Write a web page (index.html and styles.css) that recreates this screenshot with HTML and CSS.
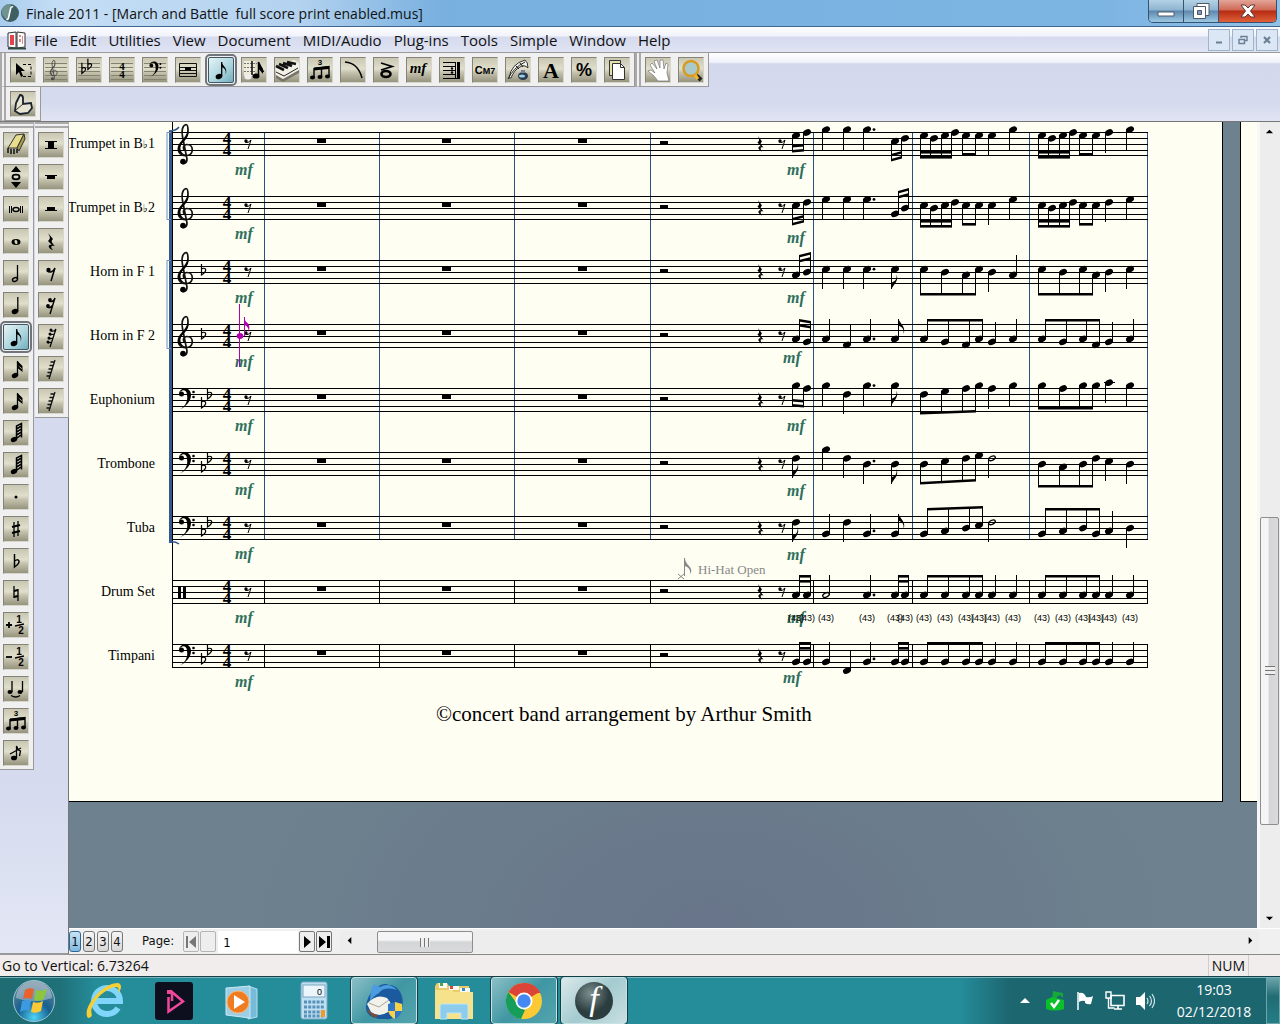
FILE: index.html
```html
<!DOCTYPE html>
<html lang="en">
<head>
	<meta charset="utf-8">
	<meta name="viewport" content="width=device-width, initial-scale=1">
	<title>Finale 2011 - [March and Battle  full score print enabled.mus]</title>
	<link rel="stylesheet" href="styles.css">
</head>
<body>

<!-- Shared icon shapes -->
<svg class="defs" aria-hidden="true">
	<symbol id="lines" viewBox="0 0 24 24"><path d="M1 5.500h22M1 9.500h22M1 13.500h22M1 17.500h22M1 21.500h22" stroke="#85836f" fill="none"/></symbol>
	<symbol id="treble" viewBox="-10 -10 20 44"><path d="M0 18.500c-4-1-3-6 1-6c7 0 7 10 0 11c-6 1-9.500-3-8.500-8c1-6 9.500-9 9.500-17c0-4-1-6-2-6c-4 1-4.500 7-3.500 12l4.500 22.500c0 5-5 6-6 3" fill="none" stroke="currentColor" stroke-width="1.700"/><path d="M-7.500 15c1-6 9.500-9 9.500-17l.5 3c0 6-7 9-8 14-.5 4 2 8 7 8-6 1-10-3-9-8z"/><circle cx="-3" cy="29.500" r="2.800"/></symbol>
	<symbol id="bass" viewBox="0 0 18 24"><circle cx="3.500" cy="6" r="2.500"/><path d="M1 6c0-7 12-8 12 1c0 7-6 12-12 15c7-4 9-9 8-15c0-6-6-6-8-1z"/><circle cx="15.500" cy="4" r="1.300"/><circle cx="15.500" cy="9" r="1.300"/></symbol>
	<symbol id="whole" viewBox="0 0 24 24"><ellipse cx="12" cy="13" rx="4.500" ry="3"/><ellipse cx="12" cy="13" rx="1.400" ry="2.200" fill="#d4d2ba" transform="rotate(-20 12 13)"/></symbol>
	<symbol id="n2" viewBox="0 0 24 24"><ellipse cx="11" cy="18.500" rx="2.600" ry="1.800" transform="rotate(-25 11 18.500)" fill="none" stroke="#000" stroke-width="1.400"/><path d="M13.500 18V4" stroke="#000" stroke-width="1.300"/></symbol>
	<symbol id="n4" viewBox="0 0 24 24"><ellipse cx="11" cy="18.500" rx="3.400" ry="2.600" transform="rotate(-20 11 18.500)"/><path d="M13.800 18V4" stroke="#000" stroke-width="1.300"/></symbol>
	<symbol id="n8" viewBox="0 0 24 24"><ellipse cx="10" cy="18.500" rx="3.400" ry="2.600" transform="rotate(-20 10 18.500)"/><path d="M12.700 18V4" stroke="#000" stroke-width="1.300"/><path d="M12.500 4c1 4 7 6 4 13c1-5-1-7-4-8z"/></symbol>
	<symbol id="n16" viewBox="0 0 24 24"><ellipse cx="11" cy="18.500" rx="3.300" ry="2.500" transform="rotate(-20 11 18.500)"/><path d="M13.500 18V4" stroke="#000" stroke-width="1.300"/><path d="M13.500 4l5 5v5l-1-3l-4-3zM13.500 8l5 5v2l-5-4z"/></symbol>
	<symbol id="n32" viewBox="0 0 24 24"><ellipse cx="10" cy="18.500" rx="3.300" ry="2.500" transform="rotate(-20 10 18.500)"/><path d="M12.500 18V5l5-2.500v14M12.500 8l5-3M12.500 11l5-3M12.500 14l5-3M13 17l4-3" stroke="#000" stroke-width="1.500" fill="none"/></symbol>
	<symbol id="r4" viewBox="0 0 24 24"><path d="M9 4l5 6c-2 2-2 3 2 7c-4-1-5 1-2 4c-5-1-6-6-1-5l-4-4c3-3 2-4 0-8z"/></symbol>
	<symbol id="r8" viewBox="0 0 24 24"><circle cx="9.500" cy="9" r="2.200"/><path d="M8 10q5 3 8-3l-4 13" fill="none" stroke="#000" stroke-width="1.500"/></symbol>
	<symbol id="r16" viewBox="0 0 24 24"><circle cx="11" cy="7" r="1.900"/><circle cx="9" cy="13" r="1.900"/><path d="M10 8q4 2 6-3l-5 16M8 14q3 2 6-2" fill="none" stroke="#000" stroke-width="1.400"/></symbol>
	<symbol id="r32" viewBox="0 0 24 24"><circle cx="12" cy="5" r="1.500"/><circle cx="11" cy="9" r="1.500"/><circle cx="10" cy="13" r="1.500"/><circle cx="9" cy="17" r="1.500"/><path d="M12 6q3 1 5-2l-6 18M11 10l4-1M10 14l4-1M9 18l4-1" fill="none" stroke="#000" stroke-width="1.200"/></symbol>
	<symbol id="r64" viewBox="0 0 24 24"><path d="M16 3l-6 19M15.500 5h-4M14.500 8.500h-4M13.500 12h-4M12.500 15.500h-4M11.500 19h-4" fill="none" stroke="#111" stroke-width="1.300"/></symbol>
	<symbol id="tuplet" viewBox="0 0 24 24"><text x="12" y="7" class="t-sans" font-size="8" text-anchor="middle">3</text><path d="M6 19V10.500L21 8.500v10M13.500 19V9.500" fill="none" stroke="#000" stroke-width="1.400"/><path d="M6 9.500l15-1.500v3l-15 1.500z"/><ellipse cx="4.500" cy="19.500" rx="2.500" ry="2"/><ellipse cx="12" cy="19" rx="2.500" ry="2"/><ellipse cx="19.500" cy="18.500" rx="2.500" ry="2"/></symbol>
	<symbol id="flatsign" viewBox="0 0 10 16"><path d="M3 1v13c3-2 5-4 4.500-6c-1-2-3-1-4.500 0" fill="none" stroke="#000" stroke-width="1.500"/></symbol>
</svg>

<header class="titlebar">
	<svg class="app-icon" viewBox="0 0 20 20"><circle cx="10" cy="10" r="9" fill="#3e5f62"/><path d="M2 6a9 9 0 0 1 9-5L8 17a9 9 0 0 1-6-11z" fill="#6f9391"/><path d="M13 4q-2-1-2.500 2l-2 9q-.500 2-2 1" stroke="#fff" stroke-width="1.600" fill="none"/></svg>
	<h1>Finale 2011 - [March and Battle&nbsp; full score print enabled.mus]</h1>
	<div class="window-buttons">
		<button aria-label="Minimize"><svg viewBox="0 0 20 18"><path d="M2 10h16v4H2z" fill="#fff" stroke="#4c5a68"/></svg></button>
		<button aria-label="Restore"><svg viewBox="0 0 20 18"><path d="M6 1.500h12v12H6z" fill="#fff" stroke="#4c5a68"/><path d="M2.500 4.500h12v12h-12z" fill="#fff" stroke="#4c5a68"/><path d="M6.500 8.500h4v4h-4z" fill="#7d9cbb" stroke="#4c5a68"/></svg></button>
		<button class="close" aria-label="Close"><svg viewBox="0 0 20 18"><path d="M3 3h4l3 3 3-3h4l-4.500 6 4.500 6h-4l-3-3-3 3H3l4.500-6z" fill="#fff" stroke="#5d3a3a"/></svg></button>
	</div>
</header>

<nav class="menubar">
	<svg class="doc-icon" viewBox="0 0 20 20"><path d="M1 3l8-1v16l-8-1zM10 2l8 1v14l-8 1z" fill="#fff" stroke="#333"/><path d="M3 5h4v10H3z" fill="#e2434e"/><path d="M12 5h2v2h-2zM12 9h2v3h-2zM15 6h1v8h-1z" fill="#da8a8a"/><path d="M1 18.500h18" stroke="#2c4a40" stroke-width="2"/></svg>
	<button>File</button>
	<button>Edit</button>
	<button>Utilities</button>
	<button>View</button>
	<button>Document</button>
	<button>MIDI/Audio</button>
	<button>Plug-ins</button>
	<button>Tools</button>
	<button>Simple</button>
	<button>Window</button>
	<button>Help</button>
	<div class="mdi-buttons">
		<button aria-label="Minimize document"><svg viewBox="0 0 10 10"><path d="M2 7.500h6" stroke="#6d7f93" stroke-width="2"/></svg></button>
		<button aria-label="Restore document"><svg viewBox="0 0 10 10"><path d="M3 3V1.500h6v4H7M1 4.500h5.500v4H1z" stroke="#6d7f93" stroke-width="1.400" fill="none"/></svg></button>
		<button aria-label="Close document"><svg viewBox="0 0 10 10"><path d="M2 2l6 6M8 2l-6 6" stroke="#6d7f93" stroke-width="2.200"/></svg></button>
	</div>
</nav>

<div class="toolbars">
	<div class="toolbar">
		<div class="tools">
			<button class="tool" aria-label="Selection"><svg viewBox="0 0 24 24"><path d="M5 5v12l3-3 2 5 2-1-2-5h4z"/><path d="M12 6.500h8v12h-8" fill="none" stroke="#000" stroke-dasharray="3 2"/></svg></button>
			<button class="tool" aria-label="Staff"><svg viewBox="0 0 24 24"><use href="#lines"/><use href="#treble" x="4" y="1" width="12" height="22" fill="#444" color="#444"/></svg></button>
			<button class="tool" aria-label="Key signature"><svg viewBox="0 0 24 24"><use href="#lines"/><use href="#flatsign" x="2" y="4" width="9" height="13"/><use href="#flatsign" x="8" y="0" width="9" height="13"/></svg></button>
			<button class="tool" aria-label="Time signature"><svg viewBox="0 0 24 24"><use href="#lines"/><text x="12" y="12" class="t-serif" font-size="11" text-anchor="middle">4</text><text x="12" y="20" class="t-serif" font-size="11" text-anchor="middle">4</text></svg></button>
			<button class="tool" aria-label="Clef"><svg viewBox="0 0 24 24"><use href="#lines"/><use href="#bass" x="4" y="3" width="17" height="18"/></svg></button>
			<button class="tool" aria-label="Measure"><svg viewBox="0 0 24 24"><path d="M3.500 5.500h17v13h-17zM3.500 9.500h17M3.500 12.500h17M3.500 15.500h17" fill="none" stroke="#111"/><path d="M9 9h6v3H9z"/></svg></button>
			<button class="tool selected" aria-label="Simple entry"><svg viewBox="0 0 24 24"><use href="#n8"/></svg></button>
			<button class="tool" aria-label="Speedy entry"><svg viewBox="0 0 24 24"><path d="M2 3h11v15H2z" fill="#eeeddc"/><path d="M2 5.500h13M2 9.500h12M2 13.500h12" stroke="#777" stroke-dasharray="2 1"/><ellipse cx="6" cy="19" rx="3.500" ry="2.500" fill="#eee"/><ellipse cx="14" cy="18" rx="3.500" ry="2.600"/><path d="M10 17V3M16.500 17V4l5 10" stroke="#000" stroke-width="1.500" fill="none"/><path d="M16 4l5 7v5l-5-6z"/></svg></button>
			<button class="tool" aria-label="HyperScribe"><svg viewBox="0 0 24 24"><path d="M1 9L19 2l5 3v9L8 23l-7-4z" fill="#f1f1e8"/><path d="M1 17l7 4 16-9v3L8 24l-7-4z" fill="#77756a"/><path d="M1 8l8 4M4 6l9 4M8 5l9 3M12 4l9 2" stroke="#111" stroke-width="2.600"/><path d="M1 14l8 4 14-8" stroke="#222" fill="none"/></svg></button>
			<button class="tool" aria-label="Tuplet"><svg viewBox="0 0 24 24"><use href="#tuplet"/></svg></button>
			<button class="tool" aria-label="Smart shape"><svg viewBox="0 0 24 24"><path d="M4 4q13 1 17 16" fill="none" stroke="#000" stroke-width="1.500"/></svg></button>
			<button class="tool" aria-label="Articulation"><svg viewBox="0 0 24 24"><path d="M7 5l11 3.500L7 12" fill="none" stroke="#000" stroke-width="1.800"/><ellipse cx="12" cy="16" rx="4.500" ry="3" fill="none" stroke="#000" stroke-width="2.600"/></svg></button>
			<button class="tool" aria-label="Expression"><svg viewBox="0 0 24 24"><text x="11" y="15" class="t-dyn" font-size="15" text-anchor="middle">mf</text></svg></button>
			<button class="tool" aria-label="Repeat"><svg viewBox="0 0 24 24"><path d="M3 4.500h12M3 8.500h12M3 12.500h12M3 16.500h12M3 20.500h16M15.500 4v16" stroke="#000" fill="none"/><path d="M17 4h3v17h-3z"/><circle cx="12" cy="10.500" r="1.200"/><circle cx="12" cy="14.500" r="1.200"/></svg></button>
			<button class="tool" aria-label="Chord"><svg viewBox="0 0 24 24"><text x="12" y="16" class="t-sans" font-size="11" text-anchor="middle">C<tspan font-size="9">M7</tspan></text></svg></button>
			<button class="tool" aria-label="Lyrics"><svg viewBox="0 0 24 24"><path d="M3 20Q5 6 19 2q3 2 3 8-4-4-8-1-6 3-9 11z" fill="#f4f4ee" stroke="#333"/><path d="M2 21Q7 10 19 4M10 8l3 3M14 5l3 4" stroke="#222" fill="none"/><ellipse cx="17" cy="18" rx="5" ry="4" fill="#27384f"/><ellipse cx="16" cy="18" rx="3" ry="1.500" fill="#9ccbe3"/><path d="M15 12h4v3h-4z" fill="#72839a"/></svg></button>
			<button class="tool" aria-label="Text"><svg viewBox="0 0 24 24"><text x="12" y="20" class="t-serif" font-size="22" text-anchor="middle">A</text></svg></button>
			<button class="tool" aria-label="Resize"><svg viewBox="0 0 24 24"><text x="12" y="18" class="t-sans" font-size="18" text-anchor="middle">%</text></svg></button>
			<button class="tool" aria-label="Page layout"><svg viewBox="0 0 24 24"><path d="M4.500 2.500h11v15h-11z" fill="#e5e0ac" stroke="#333"/><path d="M7.500 5.500h8l4 4v12h-12z" fill="#fff" stroke="#333"/><path d="M15.500 5.500v4h4" fill="none" stroke="#333"/></svg></button>
		</div>
		<div class="tools">
			<button class="tool" aria-label="Hand grabber"><svg viewBox="0 0 24 24"><path d="M2 13l3-1 4 3-5-8 2-2 5 6-3-8 3-1 3 8 0-8h3l1 9 2-6 2 1-1 9 2 8H12l-4-5z" fill="#fff" stroke="#777" stroke-width=".700"/></svg></button>
			<button class="tool" aria-label="Zoom"><svg viewBox="0 0 24 24"><path d="M17 17l5 5" stroke="#222" stroke-width="4"/><circle cx="12" cy="10.500" r="7.500" fill="#a9c9ca" stroke="#d99a20" stroke-width="2.500"/><path d="M16 17l3 4" stroke="#f5b728" stroke-width="3"/></svg></button>
		</div>
	</div>
	<div class="toolbar">
		<div class="tools">
			<button class="tool" aria-label="Open book"><svg viewBox="0 0 24 24"><path d="M5 11l4-8q3 0 3 3v6l8-1 1 5-4 5-8 1-5-3z" fill="#e8e6d2" stroke="#1b2230" stroke-width="1.800"/><path d="M5 18l7-6" stroke="#333"/></svg></button>
		</div>
	</div>
</div>

<main class="workspace">
	<aside class="palettes">
		<div class="palette">
			<button class="tool" aria-label="Eraser"><svg viewBox="0 0 24 24"><path d="M4 15L12 2l8-1-7 14z" fill="#e6de8d" stroke="#333"/><path d="M13 15l7-14 1 5-6 12z" fill="#a89d4b" stroke="#333"/><path d="M4 15v5M7 16v5M10 16v5M13 16v4" stroke="#111" stroke-width="1.500"/></svg></button>
			<button class="tool" aria-label="Repitch"><svg viewBox="0 0 24 24"><path d="M12 1l5 6H7zM12 23l5-6H7z"/><ellipse cx="12" cy="12" rx="3.500" ry="2.300" fill="none" stroke="#000" stroke-width="1.800"/></svg></button>
			<button class="tool" aria-label="Double whole note"><svg viewBox="0 0 24 24"><path d="M5.500 9v7M7.500 9v7M16.500 9v7M18.500 9v7" stroke="#000"/><ellipse cx="12" cy="12.500" rx="3" ry="2" fill="none" stroke="#000" stroke-width="1.500"/></svg></button>
			<button class="tool" aria-label="Whole note"><svg><use href="#whole"/></svg></button>
			<button class="tool" aria-label="Half note"><svg><use href="#n2"/></svg></button>
			<button class="tool" aria-label="Quarter note"><svg><use href="#n4"/></svg></button>
			<button class="tool selected" aria-label="Eighth note"><svg><use href="#n8"/></svg></button>
			<button class="tool" aria-label="16th note"><svg><use href="#n16"/></svg></button>
			<button class="tool" aria-label="32nd note"><svg><use href="#n16"/></svg></button>
			<button class="tool" aria-label="64th note"><svg><use href="#n32"/></svg></button>
			<button class="tool" aria-label="128th note"><svg><use href="#n32"/></svg></button>
			<button class="tool" aria-label="Dot"><svg viewBox="0 0 24 24"><circle cx="12" cy="12" r="1.500"/></svg></button>
			<button class="tool" aria-label="Sharp"><svg viewBox="0 0 24 24"><path d="M10 5v15M14 4v15" stroke="#000" stroke-width="1.300"/><path d="M8 10l8-2M8 16l8-2" stroke="#000" stroke-width="2.200"/></svg></button>
			<button class="tool" aria-label="Flat"><svg viewBox="0 0 24 24"><use href="#flatsign" x="6" y="4" width="13" height="16"/></svg></button>
			<button class="tool" aria-label="Natural"><svg viewBox="0 0 24 24"><path d="M10 5v12M14 8v12" stroke="#000" stroke-width="1.300"/><path d="M10 10l4-1M10 16l4-1" stroke="#000" stroke-width="2.200"/></svg></button>
			<button class="tool" aria-label="Half step up"><svg viewBox="0 0 24 24"><path d="M2 12h6M5 9v6" stroke="#000" stroke-width="1.800"/><text x="15" y="10" class="t-sans" font-size="10" text-anchor="middle">1</text><path d="M11 13l9-2" stroke="#000" stroke-width="1.300"/><text x="17" y="21" class="t-sans" font-size="10" text-anchor="middle">2</text></svg></button>
			<button class="tool" aria-label="Half step down"><svg viewBox="0 0 24 24"><path d="M2 12h6" stroke="#000" stroke-width="1.800"/><text x="15" y="10" class="t-sans" font-size="10" text-anchor="middle">1</text><path d="M11 13l9-2" stroke="#000" stroke-width="1.300"/><text x="17" y="21" class="t-sans" font-size="10" text-anchor="middle">2</text></svg></button>
			<button class="tool" aria-label="Tie"><svg viewBox="0 0 24 24"><ellipse cx="6" cy="15" rx="2.500" ry="2"/><ellipse cx="16" cy="15" rx="2.500" ry="2"/><path d="M8 15V4M18.500 15V4M7 18.500q5 3 9 0" stroke="#000" stroke-width="1.300" fill="none"/></svg></button>
			<button class="tool" aria-label="Tuplet entry"><svg><use href="#tuplet"/></svg></button>
			<button class="tool" aria-label="Grace note"><svg viewBox="0 0 24 24"><ellipse cx="10" cy="17" rx="3" ry="2.300"/><path d="M12.500 17V5q1 4 4 5l-1 5M6 13l11-6" stroke="#000" stroke-width="1.300" fill="none"/></svg></button>
		</div>
		<div class="palette">
			<button class="tool" aria-label="Double whole rest"><svg viewBox="0 0 24 24"><path d="M6 8.500h12M6 15.500h12" stroke="#000"/><path d="M9 9h6v6H9z"/></svg></button>
			<button class="tool" aria-label="Whole rest"><svg viewBox="0 0 24 24"><path d="M6 10.500h12" stroke="#000"/><path d="M8 11h8v3H8z"/></svg></button>
			<button class="tool" aria-label="Half rest"><svg viewBox="0 0 24 24"><path d="M6 13.500h12" stroke="#000"/><path d="M8 10h8v3H8z"/></svg></button>
			<button class="tool" aria-label="Quarter rest"><svg><use href="#r4"/></svg></button>
			<button class="tool" aria-label="Eighth rest"><svg><use href="#r8"/></svg></button>
			<button class="tool" aria-label="16th rest"><svg><use href="#r16"/></svg></button>
			<button class="tool" aria-label="32nd rest"><svg><use href="#r32"/></svg></button>
			<button class="tool" aria-label="64th rest"><svg><use href="#r64"/></svg></button>
			<button class="tool" aria-label="128th rest"><svg><use href="#r64"/></svg></button>
		</div>
	</aside>

	<section class="document">
		<div class="canvas">
			<div class="page">
				<svg id="score" class="score" viewBox="69 122 1153 679" role="img" aria-label="Score"></svg>
			</div>
			<div class="page next-page"></div>
		</div>
		<div class="scroll scroll-v">
			<button aria-label="Scroll up"><svg viewBox="0 0 10 10"><path d="M1 7l4-4 4 4z"/></svg></button>
			<span class="before"></span><span class="thumb"></span><span class="after"></span>
			<button aria-label="Scroll down"><svg viewBox="0 0 10 10"><path d="M1 3l4 4 4-4z"/></svg></button>
		</div>
		<div class="page-bar">
			<div class="layers">
				<button class="active">1</button>
				<button>2</button>
				<button>3</button>
				<button>4</button>
			</div>
			<label for="page-number">Page:</label>
			<button class="nav" aria-label="First page" disabled><svg viewBox="0 0 14 16"><path d="M2 2h2v12H2zM12 2v12L5 8z" fill="#777"/></svg></button>
			<button class="nav" aria-label="Previous page" disabled></button>
			<input id="page-number" type="text" value="1">
			<button class="nav" aria-label="Next page"><svg viewBox="0 0 14 16"><path d="M4 2v12l7-6z"/></svg></button>
			<button class="nav" aria-label="Last page"><svg viewBox="0 0 14 16"><path d="M2 2v12l7-6zM10 2h3v12h-3z"/></svg></button>
			<div class="scroll scroll-h">
				<button aria-label="Scroll left"><svg viewBox="0 0 10 10"><path d="M7 1L3 5l4 4z"/></svg></button>
				<span class="before"></span><span class="thumb"></span><span class="after"></span>
				<button aria-label="Scroll right"><svg viewBox="0 0 10 10"><path d="M3 1l4 4-4 4z"/></svg></button>
			</div>
		</div>
	</section>
</main>

<footer class="statusbar">
	<span>Go to Vertical: 6.73264</span>
	<span class="num">NUM</span>
</footer>

<div class="taskbar">
	<button class="start" aria-label="Start">
		<svg viewBox="0 0 44 44">
			<defs><radialGradient id="orb" cx=".5" cy=".9" r=".8"><stop offset="0" stop-color="#4fd3f7"/><stop offset=".5" stop-color="#15608f"/><stop offset="1" stop-color="#5b8096"/></radialGradient></defs>
			<circle cx="22" cy="22" r="20.500" fill="url(#orb)" stroke="#9cc6d2"/>
			<path d="M4 19a18 17 0 0 1 36 0q-18 7-36 0z" fill="#fff" opacity=".35"/>
			<path d="M13 11q4-3 9-1l-2 10q-5-2-9 0z" fill="#e8622c"/>
			<path d="M24 11q5 2 11-1l-3 10q-5 3-10 1z" fill="#8cc63e"/>
			<path d="M10 22q5-2 9 0l-2 10q-5-2-9 1z" fill="#3d9ae0"/>
			<path d="M21 23q5 2 10-1l-2 10q-5 3-10 1z" fill="#fbc935"/>
		</svg>
	</button>
	<button class="task" aria-label="Internet Explorer"><svg viewBox="0 0 40 40"><path d="M34 27a13 13 0 1 1 2-7H13" fill="none" stroke="#7fd6fa" stroke-width="6"/><path d="M4 37C-3 28 18 2 34 2q6 2 0 11 2-8-3-7C19 8 4 25 8 34q-1 3-4 3z" fill="#f6cf35"/></svg></button>
	<button class="task" aria-label="iPlayer"><svg viewBox="0 0 40 40"><rect x="1" y="1" width="38" height="38" rx="3" fill="#0d0f1e"/><path d="M13 9h5v4h-5z" fill="#f0479c"/><path d="M14.500 16v14.500L29 20.500 18 11v9" fill="none" stroke="#f0479c" stroke-width="2.500"/></svg></button>
	<button class="task" aria-label="Media Player"><svg viewBox="0 0 40 40"><path d="M24 5l9 3v28l-9 2z" fill="#77bbd9" stroke="#b4e0ef"/><path d="M2 7l24-2v32l-24-3z" fill="#9ccfe6" stroke="#c8eaf5"/><circle cx="14" cy="21" r="11" fill="#f07c22" stroke="#ffb46f"/><path d="M10 14v14l11-7z" fill="#fff"/></svg></button>
	<button class="task" aria-label="Calculator"><svg viewBox="0 0 40 40"><rect x="7" y="1" width="26" height="37" rx="2" fill="#bfe0f3" stroke="#79a8c4"/><rect x="9" y="4" width="22" height="12" fill="#eaf5fc" stroke="#7fa5bd"/><text x="28" y="14" class="t-plain" font-size="9" text-anchor="end">0</text><path d="M10 21h20M10 26h20M10 31h20M10 35h20" stroke="#5a91b8" stroke-width="3" stroke-dasharray="3 1.200"/><path d="M27 29h4v7h-4z" fill="#ef9b2c"/></svg></button>
	<button class="task open" aria-label="Thunderbird"><svg viewBox="0 0 40 40"><path d="M2 25C4 7 20 0 25 4c10 0 16 12 13 22-2 8-9 13-16 12C8 39 1 33 2 25z" fill="#1c5a9f"/><path d="M10 3l6 3q9-5 17 3-13-4-18 3-6 3-9 9 0-12 4-18z" fill="#4b9de0"/><path d="M3 23q9-11 20-6 7 7 1 14-9 6-17 0z" fill="#f2f1ea"/><path d="M5 22l10 4 10-7" stroke="#a8a69c" fill="none"/><path d="M3 27q4 6 11 7l-2 3Q4 34 3 27z" fill="#7c4f32"/><path d="M24 23l7-2 7 2v7q-2 6-7 8-5-2-7-8z" fill="#2f78c9"/><path d="M31 21l7 2v7h-7zM24 30h7v8q-5-2-7-8z" fill="#f9d148"/></svg></button>
	<button class="task" aria-label="Explorer"><svg viewBox="0 0 40 40"><path d="M3 2h10l2 3h20v33H1V5z" fill="#e9cc66"/><path d="M5 2h8v5H5zM15 5h10v4H15zM26 7h10v4H26z" fill="#f7faf8"/><path d="M6 2h3v3H6z" fill="#4da354"/><path d="M16 5h3v3h-3z" fill="#d44"/><path d="M28 7h3v3h-3z" fill="#3888c4"/><path d="M1 9h17l2 2h19v27H1z" fill="#f7e28c"/><path d="M6 38V25q0-2 2-2h24q2 0 2 2v13h-7v-6H13v6z" fill="#8ccdee" stroke="#bfe6f7"/></svg></button>
	<button class="task open" aria-label="Chrome"><svg viewBox="0 0 40 40"><circle cx="20" cy="20" r="18" fill="#fbc934"/><path d="M20 20L4.400 11A18 18 0 0 1 35.600 11z" fill="#db4437"/><path d="M20 2a18 18 0 0 1 16.500 10H20z" fill="#db4437"/><path d="M4.400 11L14 24l7 5-4 9A18 18 0 0 1 4.400 11z" fill="#149e59"/><circle cx="20" cy="20" r="8.500" fill="#fff"/><circle cx="20" cy="20" r="6.700" fill="#4688f1"/></svg></button>
	<button class="task open current" aria-label="Finale"><svg viewBox="0 0 40 40"><defs><radialGradient id="fin" cx=".4" cy=".3"><stop offset="0" stop-color="#7d8e8d"/><stop offset="1" stop-color="#2c3d40"/></radialGradient></defs><circle cx="20" cy="20" r="19" fill="url(#fin)"/><text x="20" y="29" class="t-f" font-size="34" text-anchor="middle">f</text></svg></button>
	<div class="tray">
		<button aria-label="Show hidden icons"><svg viewBox="0 0 20 20"><path d="M5 12l5-5 5 5z" fill="#fff"/></svg></button>
		<button aria-label="Safely remove"><svg viewBox="0 0 20 20"><path d="M8 0l10 2v5l-3-3-3 2-2 3H7z" fill="#16a83a"/><path d="M1 9l6-3 12 3v9q-9 3-18 0z" fill="#0bbf2b"/><path d="M6 12l3 4 5-7" stroke="#fff" stroke-width="2.500" fill="none"/></svg></button>
		<button aria-label="Action Center"><svg viewBox="0 0 20 20"><path d="M3 1v18" stroke="#fff" stroke-width="1.500"/><path d="M4 2q4-1 6 2l1 2q4 1 7-1l-2 8q-3 1-6-1v-2q-3-1-6 1z" fill="#fff"/></svg></button>
		<button aria-label="Network"><svg viewBox="0 0 20 20"><path d="M6 4.500h13v10H6zM9 18h8M13 14v4" fill="none" stroke="#fff" stroke-width="1.600"/><path d="M1 1h5v6H1zM3.500 7v10h6" fill="none" stroke="#fff" stroke-width="1.400"/></svg></button>
		<button aria-label="Volume"><svg viewBox="0 0 20 20"><path d="M1 6h4l5-5v18l-5-5H1z" fill="#fff"/><path d="M12 7q2 3 0 6M14.500 5q4 5 0 10M17 3q5 7 0 14" fill="none" stroke="#cfe5e8" stroke-width="1.200"/></svg></button>
	</div>
	<div class="clock"><time>19:03</time><time>02/12/2018</time></div>
	<button class="show-desktop" aria-label="Show desktop"></button>
</div>

<script src="score.js"></script>
</body>
</html>
```
FILE: styles.css
```css
:root {
	--ui-font: "Open Sans", "Noto Sans", sans-serif;
	--score-font: "Liberation Serif", serif;
	--dynamic: #2f6f5c;
	--blue-line: #2c4f86;
}

* {
	box-sizing: border-box;
}

body {
	margin: 0;
	height: 100vh;
	display: flex;
	flex-direction: column;
	overflow: hidden;
	font-family: var(--ui-font);
	font-size: 14px;
	color: #111;
	background: #f0f0f0;
}

button {
	margin: 0;
	padding: 0;
	border: 0;
	background: none;
	font: inherit;
	color: inherit;
	display: flex;
	align-items: center;
	justify-content: center;
}

svg {
	display: block;
}

.defs {
	display: none;
}

/* Text inside icons */
.t-sans {
	font-family: "Liberation Sans", sans-serif;
	font-weight: bold;
}

.t-plain {
	font-family: "Liberation Sans", sans-serif;
}

.t-serif {
	font-family: var(--score-font);
	font-weight: bold;
}

.t-dyn {
	font-family: var(--score-font);
	font-weight: bold;
	font-style: italic;
}

.t-f {
	font-family: var(--score-font);
	font-style: italic;
	fill: #fff;
}

/* Title bar */
.titlebar {
	display: flex;
	align-items: flex-start;
	flex: none;
	height: 27px;
	padding-right: 3px;
	background: linear-gradient(90deg, #a9cdef 0, #c5def5 60px, #b3d2ef 300px, #78b0e0 440px, #7cb4e2 1100px, #92c1e8);
	border-bottom: 1px solid #41658e;
}

.app-icon {
	width: 20px;
	height: 20px;
	margin: 3px 6px 0 0;
}

.titlebar h1 {
	flex: 1;
	margin: 0;
	font-size: 14px;
	line-height: 27px;
	font-weight: normal;
	white-space: nowrap;
	overflow: hidden;
}

.window-buttons {
	display: flex;
	height: 23px;
	border: 1px solid #34536e;
	border-top: 0;
	border-radius: 0 0 5px 5px;
	overflow: hidden;
}

.window-buttons button {
	width: 35px;
	background: linear-gradient(#b4d2e6 0, #8fb4d0 45%, #5d88ad 50%, #9cc8e4);
	border-right: 1px solid #34536e;
}

.window-buttons .close {
	width: 57px;
	border: 0;
	background: linear-gradient(#e3a598 0, #cf6a56 45%, #b62b12 50%, #e0603a);
}

.window-buttons svg {
	width: 20px;
	height: 18px;
}

/* Menu */
.menubar {
	display: flex;
	align-items: center;
	flex: none;
	gap: 12px;
	height: 26px;
	padding: 0 2px 0 7px;
	font-size: 15px;
	background: linear-gradient(#fdfdff 0, #f1f3fb 36%, #d5daee 40%, #e0e4f3);
	border-bottom: 1px solid #999;
}

.doc-icon {
	width: 20px;
	height: 20px;
	margin-right: -5px;
}

.mdi-buttons {
	display: flex;
	gap: 2px;
	margin-left: auto;
}

.mdi-buttons button {
	width: 22px;
	height: 22px;
	background: #dce7f6;
	border: 1px solid #9fb3cb;
}

.mdi-buttons svg {
	width: 10px;
	height: 10px;
}

/* Toolbars */
.toolbars {
	flex: none;
	background: linear-gradient(#fff 0, #f1f3fb 9px, #d3d8ec 11px, #d5daee 50px, #e0e4f3);
	border-bottom: 1px solid #777;
}

.toolbar {
	display: flex;
	height: 34px;
}

.tools {
	display: flex;
	align-items: center;
	gap: 7px;
	padding: 0 4px;
	background: #f0f0f0;
	border-left: 6px double #aaa;
	border-right: 1px solid #999;
	border-bottom: 1px solid #999;
}

.tool {
	flex: none;
	width: 26px;
	height: 26px;
	border: 1px solid;
	border-color: #85837a #d8d7cc #d8d7cc #85837a;
	background: linear-gradient(#c9c7b2, #e0dfcb 45%, #c5c3ae 60%, #96947e);
}

.tool svg {
	width: 24px;
	height: 24px;
}

.tool.selected {
	background: linear-gradient(135deg, #e4f4f5, #a9d3dc 60%, #6faebd);
	border-color: #456;
	outline: 2px solid #70757a;
	outline-offset: 1px;
	border-radius: 2px;
}

/* Work area */
.workspace {
	flex: 1;
	min-height: 0;
	display: flex;
}

.palettes {
	display: flex;
	align-items: flex-start;
	gap: 1px;
	width: 69px;
	flex: none;
	background: linear-gradient(#d5daee 80%, #e3e7f5);
	border-right: 1px solid #777;
	border-bottom: 2px solid #999;
}

.palette {
	display: flex;
	flex-direction: column;
	gap: 6px;
	padding: 4px 4px 3px 3px;
	background: #f0f0f0;
	border-top: 6px double #aaa;
	border-right: 1px solid #999;
	border-bottom: 1px solid #999;
}

.document {
	flex: 1;
	min-width: 0;
	display: grid;
	grid-template-columns: 1fr 23px;
	grid-template-rows: 1fr 27px;
}

.canvas {
	display: flex;
	align-items: flex-start;
	gap: 17px;
	min-width: 0;
	overflow: hidden;
	background: radial-gradient(ellipse 480px 300px at 54% 100%, #68758a, #6d828e);
}

.page {
	flex: none;
	height: 680px;
	background: #fefef3;
	border: 1px solid #000;
	border-width: 0 1px 1px 0;
}

.next-page {
	flex: 1;
	border-width: 0 0 1px 1px;
}

.score {
	width: 1153px;
	height: 679px;
}

/* Scroll bars */
.scroll {
	display: flex;
	background: #ededed;
}

.scroll-v {
	flex-direction: column;
	border-left: 3px solid #f8f8f8;
}

.scroll button {
	flex: none;
	width: 18px;
	height: 18px;
}

.scroll-v button {
	width: 19px;
}

.scroll svg {
	width: 9px;
	height: 9px;
}

.thumb {
	display: flex;
	align-items: center;
	justify-content: center;
	border: 1px solid #8e8e8e;
	border-radius: 2px;
}

.thumb::after {
	content: "";
	width: 10px;
	height: 9px;
	background: repeating-linear-gradient(var(--grip), #777 0 1px, #eee 1px 4px);
}

.scroll-v .before {
	flex: 379;
}

.scroll-v .thumb {
	--grip: 180deg;
	flex: 308;
	width: 19px;
	background: linear-gradient(90deg, #f5f5f5 40%, #d4d5d7 50%, #dadadc);
}

.scroll-v .after {
	flex: 86;
}

.scroll-h {
	flex: 1;
	margin-left: 7px;
}

.scroll-h .before {
	flex: 19;
}

.scroll-h .thumb {
	--grip: 90deg;
	flex: 94;
	height: 22px;
	background: linear-gradient(#f5f5f5 40%, #d4d5d7 50%, #dadadc);
}

.scroll-h .after {
	flex: 770;
}

/* Page bar under the score */
.page-bar {
	grid-column: 1 / 3;
	display: flex;
	align-items: flex-start;
	padding: 2px 21px 0 0;
	background: #f0f0f0;
	border-top: 1px solid #fff;
	border-bottom: 1px solid #888;
	font-family: "DejaVu Sans Condensed", "DejaVu Sans", sans-serif;
	font-size: 13px;
}

.layers {
	display: flex;
	gap: 2px;
}

.layers button {
	width: 12px;
	height: 21px;
	border: 1px solid #777;
	border-radius: 3px;
	background: linear-gradient(#f5f5f5, #d8d8d8);
}

.layers .active {
	background: linear-gradient(#c8e3f5, #7fb9e0);
	border-color: #2f6790;
}

.page-bar label {
	margin: 0 9px 0 19px;
	line-height: 20px;
}

.page-bar input {
	width: 80px;
	height: 22px;
	margin: 0 1px;
	padding: 0 5px;
	border: 0;
	background: #fff;
	font: inherit;
}

.nav {
	width: 16px;
	height: 21px;
	margin-right: 1px;
	border: 1px solid #777;
	border-radius: 2px;
	background: #eee;
}

.nav:disabled {
	border-color: #b5b5b5;
}

.nav svg {
	width: 14px;
	height: 16px;
}

/* Status bar */
.statusbar {
	flex: none;
	display: flex;
	justify-content: space-between;
	height: 21px;
	padding: 0 31px 0 2px;
	line-height: 21px;
	background: #f0edec;
}

.num {
	padding: 0 3px;
	border: 1px solid #d0cecd;
	border-width: 0 1px;
}

/* Taskbar */
.taskbar {
	flex: none;
	display: flex;
	align-items: center;
	gap: 4px;
	height: 48px;
	background: linear-gradient(90deg, #1f6c72 0, #1f7078 60px, #258c9a 95px, #258c9a 960px, #1c6670 1010px, #1c6670);
	border-top: 1px solid #16434b;
	box-shadow: inset 0 1px #7bb3bc;
}

.start {
	width: 67px;
}

.start svg {
	width: 44px;
	height: 44px;
}

.task {
	width: 66px;
	height: 47px;
	border-radius: 3px;
}

.task svg {
	width: 40px;
	height: 40px;
}

.task.open {
	border: 1px solid #c5e2e5;
	outline: 1px solid #123e46;
	background: linear-gradient(135deg, #8dbfc6, #3f97a3 50%, #54a4ae);
}

.task.current {
	background: linear-gradient(135deg, #dbe9ea, #a4cbd0 50%, #c9dfe1);
}

.tray {
	display: flex;
	gap: 10px;
	margin-left: auto;
}

.tray button,
.tray svg {
	width: 20px;
	height: 20px;
}

.clock {
	display: flex;
	flex-direction: column;
	width: 100px;
	margin-left: 5px;
	text-align: center;
	line-height: 22px;
	color: #fff;
}

.show-desktop {
	width: 14px;
	height: 46px;
	margin-left: -2px;
	border: 1px solid #6da5ac;
	background: linear-gradient(#69a1a8, #1f6c72 40%, #257e86);
}

/* Score */
.staff-line {
	stroke: #000;
	shape-rendering: crispEdges;
}

.system-line {
	stroke: var(--blue-line);
	shape-rendering: crispEdges;
}

.stem {
	stroke: #000;
	shape-rendering: crispEdges;
}

.stroke {
	fill: none;
	stroke: #000;
}

.bracket {
	fill: none;
	stroke: #6f8fc0;
}

.staff-name {
	font: 14px var(--score-font);
	text-anchor: end;
}

.flat-small {
	font: 11px "DejaVu Sans", sans-serif;
}

.dynamic {
	font: italic bold 16px var(--score-font);
	text-anchor: middle;
	fill: var(--dynamic);
}

.meter {
	font: bold 17px var(--score-font);
	text-anchor: middle;
}

.percussion {
	font: 9px "Liberation Sans", sans-serif;
	text-anchor: middle;
}

.hint {
	font: 13px var(--score-font);
	fill: #888;
}

.credit {
	font: 21px var(--score-font);
}
```
FILE: score.js
```js
// Positions: p is counted in half spaces down from the top line of the staff.
// Flags for single notes: u/d stem, f flag, h half note, . dotted
const LEFT = 172;
const RIGHT = 1147;
const BARS = [264, 379, 514, 650, 813, 912, 1029, 1147];
const LINES = [0, 6, 12, 18, 23];
const M6 = [924, 945, 966, 979];
const M7 = [1042, 1063, 1083, 1096];
const M6_RUN = [924, 934, 945, 955];
const M7_RUN = [1042, 1052, 1063, 1073];

// one beamed group: x list, p list, direction, beam start/end (from top line), beam count
function group(xs, ps, dir, y1, y2, count) {
	return { xs, ps, dir, y1, y2, count };
}

const staves = [
	{ name: 'Trumpet in B♭1', y: 132, clef: 'treble', flats: [], mf: [796, 39],
		groups: [
			group([796, 807], [1, 0], 'd', 19, 18, 2), group([895, 905], [3, 2], 'd', 28, 25, 2),
			group(M6_RUN, [1, 2, 1, 0], 'd', 25, 25, 2), group([966, 979], [1, 1], 'd', 22, 22, 1),
			group(M7_RUN, [1, 2, 1, 0], 'd', 25, 25, 2), group([1083, 1096], [1, 1], 'd', 22, 22, 1)
		],
		notes: [[826, -1, 'd'], [847, -1, 'd'], [867, -1, 'd.'], [992, 1, 'd'], [1013, -1, 'd'], [1109, 0, 'd'], [1130, -1, 'd']] },
	{ name: 'Trumpet in B♭2', y: 196, clef: 'treble', flats: [], mf: [796, 43],
		groups: [
			group([796, 807], [3, 2], 'd', 28, 25, 2), group([895, 905], [6, 4], 'u', -4, -7, 2),
			group(M6_RUN, [3, 4, 3, 2], 'd', 30, 30, 2), group([966, 979], [3, 3], 'd', 28, 28, 1),
			group(M7_RUN, [3, 4, 3, 2], 'd', 30, 30, 2), group([1083, 1096], [3, 3], 'd', 28, 28, 1)
		],
		notes: [[826, 1, 'd'], [847, 1, 'd'], [867, 1, 'd.'], [992, 3, 'd'], [1013, 1, 'd'], [1109, 2, 'd'], [1130, 1, 'd']] },
	{ name: 'Horn in F 1', y: 260, clef: 'treble', flats: [[203, 12]], mf: [796, 39],
		groups: [group([796, 807], [5, 4], 'u', -4, -7, 2), group(M6, [3, 4, 5, 3], 'd', 34, 34, 1), group(M7, [3, 4, 3, 5], 'd', 34, 34, 1)],
		notes: [[826, 3, 'd'], [847, 3, 'd'], [867, 3, 'd.'], [895, 3, 'df'], [992, 4, 'd'], [1013, 5, 'u'], [1109, 4, 'd'], [1130, 3, 'd']] },
	{ name: 'Horn in F 2', y: 324, clef: 'treble', flats: [[203, 12]], mf: [792, 35],
		groups: [group([796, 807], [5, 6], 'u', -4, -2, 2), group(M6, [5, 6, 7, 5], 'u', -4, -4, 1), group(M7, [5, 6, 5, 7], 'u', -4, -4, 1)],
		notes: [[826, 5, 'u'], [847, 7, 'u'], [867, 5, 'u.'], [895, 5, 'uf'], [992, 6, 'u'], [1013, 5, 'u'], [1109, 6, 'u'], [1130, 5, 'u']] },
	{ name: 'Euphonium', y: 388, clef: 'bass', flats: [[203, 17], [209, 8]], mf: [796, 39],
		groups: [group([796, 807], [-1, 0], 'd', 17, 18, 2), group(M6, [2, 1, 0, -1], 'd', 25, 23, 1), group(M7, [-1, 0, -1, -1], 'd', 20, 20, 1)],
		notes: [[826, -1, 'd'], [847, 2, 'd'], [867, -1, 'd.'], [895, -1, 'df'], [992, 0, 'd'], [1013, -1, 'd'], [1109, -2, 'd'], [1130, -1, 'd']] },
	{ name: 'Trombone', y: 452, clef: 'bass', flats: [[203, 17], [209, 8]], mf: [796, 40],
		groups: [group(M6, [4, 3, 2, 1], 'd', 31, 28, 1), group(M7, [4, 5, 4, 2], 'd', 34, 34, 1)],
		notes: [[796, 2, 'df'], [826, -1, 'd'], [847, 2, 'd'], [867, 4, 'd.'], [895, 4, 'df'], [992, 2, 'dh'], [1109, 3, 'd'], [1130, 4, 'd']] },
	{ name: 'Tuba', y: 516, clef: 'bass', flats: [[203, 17], [209, 8]], mf: [796, 40],
		groups: [group(M6, [6, 5, 4, 3], 'u', -7, -9, 1), group(M7, [6, 5, 4, 6], 'u', -7, -7, 1)],
		notes: [[796, 2, 'df'], [826, 6, 'u'], [847, 2, 'd'], [867, 6, 'u.'], [895, 6, 'uf'], [992, 2, 'dh'], [1109, 5, 'u'], [1130, 4, 'd']] },
	{ name: 'Drum Set', y: 580, clef: 'drum', flats: [], mf: [796, 39],
		groups: [group([796, 807], [5, 5], 'u', -4, -4, 2), group([895, 905], [5, 5], 'u', -4, -4, 2), group(M6, [5, 5, 5, 5], 'u', -4, -4, 1), group(M7, [5, 5, 5, 5], 'u', -4, -4, 1)],
		notes: [[826, 5, 'uh'], [867, 5, 'u.'], [992, 5, 'u'], [1013, 5, 'u'], [1109, 5, 'u'], [1130, 5, 'u']] },
	{ name: 'Timpani', y: 644, clef: 'bass', flats: [[203, 17], [209, 8]], mf: [792, 35],
		groups: [group([796, 807], [6, 6], 'u', -1, -1, 2), group([895, 905], [6, 6], 'u', -1, -1, 2), group(M6, [6, 6, 6, 6], 'u', -1, -1, 1), group(M7, [6, 6, 6, 6], 'u', -1, -1, 1)],
		notes: [[826, 6, 'u'], [847, 9, 'u'], [867, 6, 'u.'], [992, 6, 'u'], [1013, 6, 'u'], [1109, 6, 'u'], [1130, 6, 'u']] }
];

function line(x1, y1, x2, y2, cls) {
	return `<path class="${cls}" d="M${x1} ${y1}L${x2} ${y2}"/>`;
}

function head(x, y, half) {
	if (half) {
		return `<ellipse class="stroke" cx="${x}" cy="${y}" rx="3.5" ry="2" stroke-width="1.3" transform="rotate(-25 ${x} ${y})"/>`;
	}
	return `<ellipse cx="${x}" cy="${y}" rx="4.2" ry="3" transform="rotate(-25 ${x} ${y})"/>`;
}

function pitchY(staff, p) {
	return staff.y + 0.5 + p * 2.9;
}

function drawNote(staff, [x, p, flags]) {
	const y = pitchY(staff, p);
	const up = flags.includes('u');
	const sx = up ? x + 3.5 : x - 3.5;
	const end = up ? y - 20 : y + 20;
	let out = head(x, y, flags.includes('h')) + line(sx, y, sx, end, 'stem');
	if (flags.includes('f')) {
		const s = up ? 1 : -1;
		out += `<path d="M${sx} ${end}c1 ${4 * s} 8 ${8 * s} 5 ${15 * s}c1 ${-6 * s} -3 ${-8 * s} -5 ${-8 * s}z"/>`;
	}
	if (flags.includes('.')) {
		out += `<circle cx="${x + 7}" cy="${y - (p % 2 ? 0 : 3)}" r="1.4"/>`;
	}
	if (p <= -2) {
		out += line(x - 5, y, x + 6, y, 'staff-line');
	}
	return out;
}

function drawGroup(staff, g) {
	const off = g.dir === 'u' ? 3.5 : -3.5;
	const first = g.xs[0];
	const last = g.xs[g.xs.length - 1];
	let out = '';
	g.xs.forEach((x, i) => {
		const end = staff.y + g.y1 + (g.y2 - g.y1) * (x - first) / (last - first);
		const y = pitchY(staff, g.ps[i]);
		out += head(x, y) + line(x + off, y, x + off, end, 'stem');
	});
	for (let b = 0; b < g.count; b++) {
		const dy = staff.y + b * (g.dir === 'u' ? 5 : -5);
		out += `<path d="M${first + off - 0.5} ${g.y1 + dy - 1}L${last + off + 0.5} ${g.y2 + dy - 1}v2.6L${first + off - 0.5} ${g.y1 + dy + 1.6}z"/>`;
	}
	return out;
}

function eighthRest(x, y) {
	return `<g transform="translate(${x} ${y})"><circle cx="-2" cy="-2" r="1.7"/><path class="stroke" d="M-3 -1q3 2 6 -2l-3 9"/></g>`;
}

function quarterRest(x, y) {
	return `<path transform="translate(${x} ${y})" d="M-2 -7l4 5.500c-2 2-1.500 2.500 1.500 6c-3.500-1-3.500 1-1.500 4c-4-1-5-6-1-5l-3.500-4c2-2 2-3 .500-6.500z"/>`;
}

function drawClef(staff) {
	const y = staff.y;
	if (staff.clef === 'treble') {
		return `<use href="#treble" x="176" y="${y - 10}" width="20" height="44"/>`;
	}
	if (staff.clef === 'bass') {
		return `<use href="#bass" x="178" y="${y}" width="18" height="24"/>`;
	}
	return `<path d="M178 ${y + 6}h3v12h-3zM183 ${y + 6}h3v12h-3z"/>`;
}

function drawStaff(staff, index) {
	const y = staff.y;
	const name = staff.name.replace('♭', '<tspan class="flat-small">♭</tspan>');
	let out = `<text class="staff-name" x="155" y="${y + 16}">${name}</text>`;
	LINES.forEach(l => out += line(LEFT, y + l + 0.5, RIGHT + 1, y + l + 0.5, 'staff-line'));
	if (index > 6) {
		BARS.forEach(x => out += line(x + 0.5, y, x + 0.5, y + 24, 'staff-line'));
	}
	out += drawClef(staff);
	staff.flats.forEach(([x, dy]) => {
		out += `<path class="stroke" stroke-width="1.2" d="M${x - 1.5} ${y + dy - 8}v11c3-2 5-4 4-6c-1-1-3-1-4 0"/>`;
	});
	out += `<text class="meter" x="227" y="${y + 12}">4</text><text class="meter" x="227" y="${y + 24}">4</text>`;
	out += eighthRest(248, y + 11) + eighthRest(782, y + 11) + quarterRest(760, y + 11);
	[321, 446, 582].forEach(x => out += `<path d="M${x - 4} ${y + 7}h9v4h-9z"/>`);
	out += `<path d="M660 ${y + 9}h8v3h-8z"/>`;
	out += `<text class="dynamic" x="244" y="${y + 43}">mf</text>`;
	out += `<text class="dynamic" x="${staff.mf[0]}" y="${y + staff.mf[1] + 4}">mf</text>`;
	staff.groups.forEach(g => out += drawGroup(staff, g));
	staff.notes.forEach(n => out += drawNote(staff, n));
	if (staff.clef === 'drum') {
		const xs = staff.groups.flatMap(g => g.xs).concat(staff.notes.map(n => n[0]));
		xs.forEach(x => out += `<text class="percussion" x="${x}" y="${y + 41}">(43)</text>`);
	}
	return out;
}

function drawSystem() {
	let out = line(172.5, 122, 172.5, 668, 'staff-line');
	BARS.forEach(x => out += line(x + 0.5, 132, x + 0.5, 540, 'system-line'));
	out += '<path d="M169 131h3v412h-3z" fill="#34598f"/>';
	out += '<path d="M169 131q7 0 10-4M169 542q6-1 10 2" fill="none" stroke="#34598f" stroke-width="1.500"/>';
	out += '<path class="bracket" d="M171 132.500h-4v87h4M171 260.500h-4v88h4"/>';
	return out;
}

// Entry caret on Horn 2, and the ghost note above the drums
const caret = '<g stroke="#b000b0" fill="#b000b0"><path d="M239.500 304v63M244.500 336v-19" fill="none" shape-rendering="crispEdges"/><ellipse cx="240" cy="336" rx="3" ry="2.500"/><path d="M244.500 317q0 4 3 6t1 10q1-6-4-8z" stroke="none"/></g>';
const ghost = '<g stroke="#888" fill="none"><path d="M678 574l6 5M684 574l-6 5M684.500 576v-18"/><path d="M685 558q0 4 4 8t1 8q1-6-5-8z" fill="#888" stroke="none"/></g>';

document.getElementById('score').innerHTML =
	drawSystem() + staves.map(drawStaff).join('') + caret + ghost +
	'<text class="hint" x="698" y="574">Hi-Hat Open</text>' +
	'<text class="credit" x="436" y="721">©concert band arrangement by Arthur Smith</text>';
```
